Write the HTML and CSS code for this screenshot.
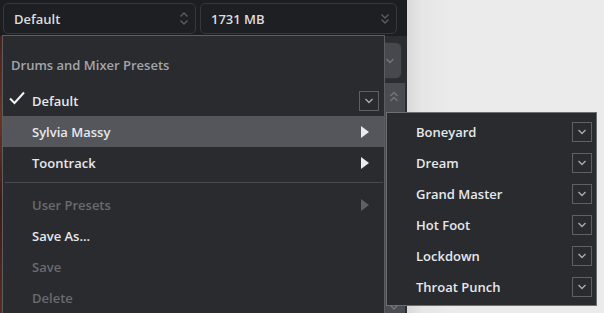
FILE: index.html
```html
<!DOCTYPE html>
<html>
<head>
<meta charset="utf-8">
<link rel="stylesheet" href="styles.css">
</head>
<body>
<div class="screen">
  <div class="panel">
    <div class="toolbar">
      <div class="select preset-select">
        <span>Default</span>
        <svg class="sel-icon" width="10" height="15" viewBox="0 0 10 15"><path d="M1.5 5.5 L5 2 L8.5 5.5 M1.5 9.5 L5 13 L8.5 9.5"/></svg>
      </div>
      <div class="select mem-select">
        <span>1731 MB</span>
        <svg class="sel-icon" width="10" height="12" viewBox="0 0 10 12"><path d="M1.5 1.5 L5 5 L8.5 1.5 M1.5 6.5 L5 10 L8.5 6.5"/></svg>
      </div>
    </div>
    <div class="panel-body">
      <div class="artwork"></div>
      <div class="body-main"></div>
      <div class="side">
        <div class="side-btn">
          <svg class="side-icon" width="10" height="8" viewBox="0 0 10 8"><path d="M1.5 2 L5 5.5 L8.5 2"/></svg>
        </div>
        <div class="side-scroll">
          <svg class="side-icon" width="10" height="12" viewBox="0 0 10 12"><path d="M1.5 5 L5 1.5 L8.5 5 M1.5 10 L5 6.5 L8.5 10"/></svg>
          <svg class="side-icon" width="10" height="12" viewBox="0 0 10 12"><path d="M1.5 1.5 L5 5 L8.5 1.5 M1.5 6.5 L5 10 L8.5 6.5"/></svg>
        </div>
      </div>
    </div>
  </div>
  <div class="stage"></div>
</div>

<div class="menu main-menu">
  <div class="menu-header">Drums and Mixer Presets</div>
  <div class="item checked">
    <svg class="check" width="16" height="14" viewBox="0 0 16 14"><path d="M1 7.5 L5.5 12 L15 1.5"/></svg>
    <span class="label">Default</span>
    <span class="drop"><svg width="10" height="6" viewBox="0 0 10 6"><path d="M1.5 1 L5 4.5 L8.5 1"/></svg></span>
  </div>
  <div class="item active">
    <span class="label">Sylvia Massy</span>
    <svg class="arrow" width="8" height="12" viewBox="0 0 8 12"><path d="M0 0 L8 6 L0 12 Z"/></svg>
  </div>
  <div class="item">
    <span class="label">Toontrack</span>
    <svg class="arrow" width="8" height="12" viewBox="0 0 8 12"><path d="M0 0 L8 6 L0 12 Z"/></svg>
  </div>
  <div class="separator"></div>
  <div class="item disabled">
    <span class="label">User Presets</span>
    <svg class="arrow" width="8" height="12" viewBox="0 0 8 12"><path d="M0 0 L8 6 L0 12 Z"/></svg>
  </div>
  <div class="item"><span class="label">Save As...</span></div>
  <div class="item disabled"><span class="label">Save</span></div>
  <div class="item disabled"><span class="label">Delete</span></div>
</div>

<div class="menu submenu">
  <div class="item"><span class="label">Boneyard</span><span class="drop"><svg width="10" height="6" viewBox="0 0 10 6"><path d="M1.5 1 L5 4.5 L8.5 1"/></svg></span></div>
  <div class="item"><span class="label">Dream</span><span class="drop"><svg width="10" height="6" viewBox="0 0 10 6"><path d="M1.5 1 L5 4.5 L8.5 1"/></svg></span></div>
  <div class="item"><span class="label">Grand Master</span><span class="drop"><svg width="10" height="6" viewBox="0 0 10 6"><path d="M1.5 1 L5 4.5 L8.5 1"/></svg></span></div>
  <div class="item"><span class="label">Hot Foot</span><span class="drop"><svg width="10" height="6" viewBox="0 0 10 6"><path d="M1.5 1 L5 4.5 L8.5 1"/></svg></span></div>
  <div class="item"><span class="label">Lockdown</span><span class="drop"><svg width="10" height="6" viewBox="0 0 10 6"><path d="M1.5 1 L5 4.5 L8.5 1"/></svg></span></div>
  <div class="item"><span class="label">Throat Punch</span><span class="drop"><svg width="10" height="6" viewBox="0 0 10 6"><path d="M1.5 1 L5 4.5 L8.5 1"/></svg></span></div>
</div>
</body>
</html>
```

FILE: styles.css
```css
* { box-sizing: border-box; }
html, body { margin: 0; padding: 0; }
body {
  width: 604px;
  height: 313px;
  overflow: hidden;
  background: #ebebeb;
  font-family: "Open Sans", "Noto Sans", sans-serif;
  font-size: 13px;
  font-weight: 600;
  position: relative;
}
.screen {
  display: flex;
  height: 313px;
}
.panel {
  width: 407px;
  flex: none;
  display: flex;
  flex-direction: column;
  background: #2c2d31;
}
.toolbar {
  height: 36px;
  flex: none;
  display: flex;
  gap: 4px;
  padding: 3px 10px 2px 3px;
  background: #1d1e22;
}
.select {
  display: flex;
  align-items: center;
  justify-content: space-between;
  border: 1px solid #36373c;
  border-radius: 5px;
  background: #1e1f23;
  color: #dcdddf;
  padding: 0 6px 0 10px;
}
.preset-select { width: 193px; }
.mem-select { flex: 1; }
.sel-icon path { fill: none; stroke: #5a5c61; stroke-width: 1.4; }
.panel-body {
  flex: 1;
  display: flex;
}
.artwork {
  width: 3px;
  background: linear-gradient(180deg, #4a2219 0%, #6a3324 30%, #3d1c16 60%, #5a2b20 100%);
}
.body-main { flex: 1; }
.side {
  width: 60px;
  display: flex;
  flex-direction: column;
  gap: 4px;
  padding: 6px 2px 0 0;
}
.side-btn {
  height: 37px;
  margin-right: 3px;
  background: #46484d;
  border: 1px solid #303136;
  border-radius: 6px;
  display: flex;
  align-items: center;
  justify-content: flex-end;
  padding-right: 6px;
}
.side-scroll {
  flex: 1;
  align-self: flex-end;
  width: 22px;
  background: #4a4c52;
  display: flex;
  flex-direction: column;
  justify-content: space-between;
  align-items: center;
  padding: 8px 0 2px;
}
.side-icon path { fill: none; stroke: #74767b; stroke-width: 1.4; }
.stage {
  flex: 1;
  background: linear-gradient(90deg, #d9d9d9 0px, #e6e6e6 15px, #ebebeb 45px);
}

.menu {
  position: absolute;
  background: #2a2b2f;
  color: #e6e8ec;
  overflow: hidden;
}
.main-menu {
  left: 2px;
  top: 35px;
  width: 383px;
  height: 278px;
  border: 1px solid #5b5d61;
  border-bottom: none;
  padding-top: 14px;
}
.submenu {
  left: 386px;
  top: 112px;
  width: 211px;
  height: 194px;
  border: 1px solid #6c6e72;
  padding-top: 3px;
}
.menu-header {
  height: 31px;
  line-height: 31px;
  padding-left: 8px;
  color: #a3a5a9;
  margin-bottom: 4px;
}
.item {
  height: 31px;
  flex: none;
  display: flex;
  align-items: center;
  position: relative;
}
.main-menu .item { padding: 0 15px 0 29px; }
.submenu .item { padding: 0 4px 0 29px; }
.item .label { flex: 1; }
.item.active { background: #55565b; }
.item.disabled { color: #696b6f; }
.check {
  position: absolute;
  left: 6px;
  top: 6px;
}
.check path { fill: none; stroke: #f2f3f5; stroke-width: 2; }
.arrow path { fill: #e8ebf2; }
.item.disabled .arrow path { fill: #5e6064; }
.drop {
  width: 20px;
  height: 20px;
  border: 1px solid #5e6064;
  display: flex;
  align-items: center;
  justify-content: center;
}
.main-menu .drop { margin-right: -10px; }
.drop path { fill: none; stroke: #a8aaae; stroke-width: 1.4; }
.separator {
  margin: 4px 1px 0 2px;
  border-top: 1px solid #4a4b50;
  height: 7px;
}
```
